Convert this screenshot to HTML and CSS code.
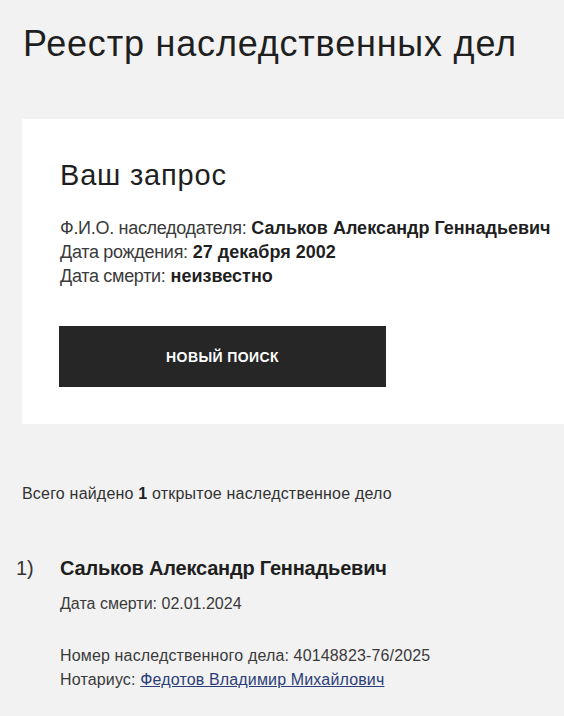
FILE: index.html
```html
<!DOCTYPE html>
<html lang="ru">
<head>
<meta charset="utf-8">
<title>Реестр наследственных дел</title>
<link rel="stylesheet" href="styles.css">
</head>
<body>
<main class="page">
  <h1 class="page-title">Реестр наследственных дел</h1>

  <section class="request-card">
    <h2 class="request-title">Ваш запрос</h2>
    <div class="request-info">
      <div><span class="label">Ф.И.О. наследодателя:</span> <b>Сальков Александр Геннадьевич</b></div>
      <div><span class="label">Дата рождения:</span> <b>27 декабря 2002</b></div>
      <div><span class="label">Дата смерти:</span> <b>неизвестно</b></div>
    </div>
    <button class="btn-search" type="button">Новый поиск</button>
  </section>

  <p class="summary">Всего найдено <b>1</b> открытое наследственное дело</p>

  <ol class="results">
    <li class="result">
      <span class="result-num">1)</span>
      <div class="result-body">
        <div class="result-name">Сальков Александр Геннадьевич</div>
        <div class="result-death">Дата смерти: 02.01.2024</div>
        <div class="result-case">
          <div>Номер наследственного дела: 40148823-76/2025</div>
          <div>Нотариус: <a href="#" class="notary-link">Федотов Владимир Михайлович</a></div>
        </div>
      </div>
    </li>
  </ol>
</main>
</body>
</html>
```

FILE: styles.css
```css
html, body {
  margin: 0;
  padding: 0;
  background: #f2f2f2;
}
body {
  font-family: "Liberation Sans", Arial, sans-serif;
  color: #222;
  overflow-x: hidden;
}
.page {
  display: flex;
  flex-direction: column;
}
.page-title {
  margin: 24px 0 0 23px;
  font-size: 36px;
  line-height: 40px;
  letter-spacing: 0.8px;
  font-weight: normal;
  color: #1f1f1f;
}
.request-card {
  margin: 55px 0 0 22px;
  background: #fff;
  padding: 40px 0 37px 38px;
  display: flex;
  flex-direction: column;
  align-items: flex-start;
}
.request-title {
  margin: 0;
  font-size: 29px;
  line-height: 32px;
  letter-spacing: 0.8px;
  font-weight: normal;
  color: #1f1f1f;
}
.request-info {
  margin-top: 25px;
  font-size: 18px;
  line-height: 24px;
  color: #3a3a3a;
  white-space: nowrap;
}
.request-info .label {
  letter-spacing: -0.3px;
}
.request-info b {
  color: #1f1f1f;
}
.btn-search {
  margin-top: 38px;
  margin-left: -1px;
  width: 327px;
  height: 61px;
  background: #262626;
  color: #fff;
  border: 0;
  font-family: "Liberation Sans", Arial, sans-serif;
  font-size: 14px;
  letter-spacing: 0.4px;
  font-weight: bold;
  text-transform: uppercase;
}
.summary {
  margin: 60px 0 0 22px;
  font-size: 16px;
  line-height: 20px;
  letter-spacing: 0.2px;
  color: #333;
}
.summary b { color: #1f1f1f; }
.results {
  list-style: none;
  margin: 50px 0 0 0;
  padding: 0;
}
.result {
  display: flex;
}
.result-num {
  width: 60px;
  box-sizing: border-box;
  padding-left: 16px;
  font-size: 20px;
  line-height: 28px;
  color: #333;
}
.result-body {
  display: flex;
  flex-direction: column;
}
.result-name {
  font-size: 20px;
  line-height: 28px;
  letter-spacing: -0.2px;
  font-weight: bold;
  color: #1f1f1f;
}
.result-death {
  margin-top: 10px;
  font-size: 16px;
  line-height: 24px;
  color: #3a3a3a;
}
.result-case {
  margin-top: 28px;
  font-size: 16px;
  line-height: 24px;
  letter-spacing: 0.15px;
  color: #3a3a3a;
}
.notary-link {
  color: #2c3e78;
  text-decoration: underline;
}
```
